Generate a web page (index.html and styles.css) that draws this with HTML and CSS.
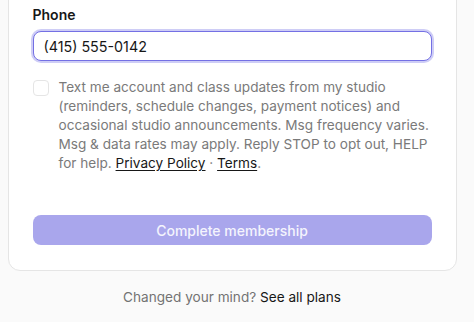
FILE: index.html
```html
<!DOCTYPE html>
<html lang="en">
<head>
    <meta charset="UTF-8">
    <meta name="viewport" content="width=device-width, initial-scale=1.0">
    <title>Complete membership</title>
    <link rel="stylesheet" href="styles.css">
</head>
<body>
    <div class="page">
        <div class="card">
            <label class="field-label" for="phone">Phone</label>
            <input id="phone" class="field-input" type="text" value="(415) 555-0142">

            <div class="consent">
                <span class="checkbox"></span>
                <p class="consent-text">
                    Text me account and class updates from my studio (reminders, schedule changes, payment notices) and occasional studio announcements. Msg frequency varies. Msg &amp; data rates may apply. Reply STOP to opt out, HELP for help. <a href="#">Privacy Policy</a> · <a href="#">Terms</a>.
                </p>
            </div>

            <button class="submit" disabled>Complete membership</button>
        </div>

        <p class="footer">Changed your mind? <a href="#">See all plans</a></p>
    </div>
</body>
</html>
```

FILE: styles.css
```css
body {
    font-family: Inter, "Noto Sans", sans-serif;
    background-color: #fafafa;
    margin: 0;
    padding: 0;
    color: #171717;
}

.page {
    width: 449px;
    margin-left: 7.5px;
}

.card {
    margin-top: -20px;
    background-color: #fff;
    border: 1px solid #e5e5e5;
    border-radius: 12px;
    padding: 24px 24px 25px 24px;
    display: flex;
    flex-direction: column;
}

.field-label {
    font-size: 14px;
    font-weight: 600;
    line-height: 20px;
    margin-bottom: 6px;
}

.field-input {
    font-family: inherit;
    font-size: 14.3px;
    color: #171717;
    height: 30px;
    padding: 0 10px;
    border: 1px solid #7470e4;
    border-radius: 8px;
    box-shadow: 0 0 0 2px rgba(116, 112, 228, 0.35);
    outline: none;
    box-sizing: border-box;
    margin-bottom: 17px;
}

.consent {
    display: flex;
    gap: 10px;
}

.checkbox {
    flex: none;
    width: 14px;
    height: 14px;
    margin-top: 2px;
    border: 1px solid #e5e5e5;
    border-radius: 4px;
    background-color: #fff;
}

.consent-text {
    margin: 0;
    font-size: 13.6px;
    line-height: 19px;
    color: #7a7a7a;
}

.consent-text a {
    color: #171717;
    text-decoration: underline;
    text-underline-offset: 2px;
}

.submit {
    margin-top: 42px;
    height: 30px;
    border: none;
    border-radius: 8px;
    background-color: #a9a6ec;
    color: #f4f4fd;
    font-family: inherit;
    font-size: 14px;
    font-weight: 500;
}

.footer {
    margin: 17px 0 0 0;
    text-align: center;
    font-size: 13.6px;
    line-height: 18px;
    color: #737373;
}

.footer a {
    color: #171717;
    text-decoration: none;
    border-bottom: 1px solid #171717;
    padding-bottom: 2px;
}
```
